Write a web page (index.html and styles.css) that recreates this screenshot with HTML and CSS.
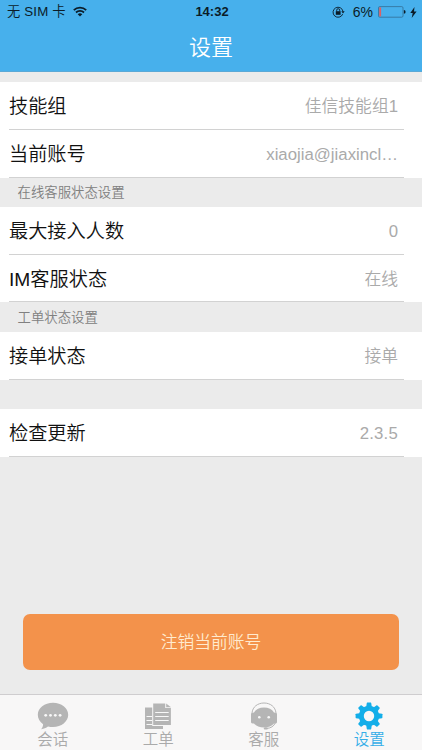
FILE: index.html
```html
<!DOCTYPE html>
<html lang="zh-CN">
<head>
<meta charset="utf-8">
<title>设置</title>
<link rel="stylesheet" href="styles.css">
</head>
<body>
<div class="app">
  <header class="header">
    <div class="status">
      <div class="status-left">
        <span>无 SIM 卡</span>
        <svg class="wifi" width="14" height="11" viewBox="0 0 14 11" fill="none" stroke="#0b1c28" stroke-width="1.8"><path d="M.8 4.1a9 9 0 0 1 12.4 0M3 6.5a5.8 5.8 0 0 1 8 0"/><path d="M4.7 8.2a3.4 3.4 0 0 1 4.6 0L7 10.5z" fill="#0b1c28" stroke="none"/></svg>
      </div>
      <span class="clock">14:32</span>
      <div class="status-right">
        <svg class="lock" width="13" height="12" viewBox="0 0 13 12" fill="none" stroke="#0b1c28"><path d="M10.7 8.1A5 5 0 1 1 11 5.5" stroke-width=".9"/><path d="M9.3 5.3h3.4L11 7.5z" fill="#0b1c28" stroke="none"/><path d="M4.7 5.4V4.2a1.5 1.5 0 0 1 3 0v1.2" stroke-width=".9"/><path d="M3.8 5.2h4.8v3.6H3.8z" fill="#0b1c28" stroke="none"/></svg>
        <span class="percent">6%</span>
        <svg class="battery" width="28" height="12" viewBox="0 0 28 12"><rect x=".5" y=".6" width="24.5" height="10.6" rx="1.3" fill="none" stroke="#326f96" stroke-width=".8"/><path d="M1.2 1.4h1.9v9H1.2z" fill="#dc6165"/><path d="M25.9 4.1q1.7 0 1.7 1.8t-1.7 1.8z" fill="#0b1c28"/></svg>
        <svg class="bolt" width="7" height="11" viewBox="0 0 7 11"><path d="M4.5 0 .3 5.9h2.4L1.7 11l4.9-6.6H4z" fill="#0b1c28"/></svg>
      </div>
    </div>
    <h1 class="title">设置</h1>
  </header>
  <main class="content">
    <section class="group">
      <div class="row"><span class="label">技能组</span><span class="value">佳信技能组1</span></div>
      <div class="row"><span class="label">当前账号</span><span class="value">xiaojia@jiaxincl…</span></div>
    </section>
    <h2 class="section-title">在线客服状态设置</h2>
    <section class="group">
      <div class="row"><span class="label">最大接入人数</span><span class="value">0</span></div>
      <div class="row row-short"><span class="label">IM客服状态</span><span class="value">在线</span></div>
    </section>
    <h2 class="section-title section-tall">工单状态设置</h2>
    <section class="group">
      <div class="row"><span class="label">接单状态</span><span class="value">接单</span></div>
    </section>
    <section class="group group-update">
      <div class="row"><span class="label">检查更新</span><span class="value version">2.3.5</span></div>
    </section>
    <button class="logout">注销当前账号</button>
  </main>
  <nav class="tabs">
    <a class="tab">
      <svg width="32" height="28" viewBox="0 0 32 28"><path d="M16 .7c8.4 0 15.200 5.300 15.200 12S24.400 25 16 25c-1.800 0-3.500-.2-5-.6-1.800 1.300-4.200 2.200-6.900 2.900 1.200-1.500 1.900-3.200 2-5.100C2.800 19.900.8 16.500.8 12.700.8 6 7.600.7 16 .7z" fill="#b5b5b5"/><g fill="#f8f8f8"><circle cx="8.700" cy="13.300" r="1.400"/><circle cx="13.500" cy="13.300" r="1.400"/><circle cx="18.300" cy="13.300" r="1.400"/><circle cx="23.100" cy="13.300" r="1.400"/></g></svg>
      <span>会话</span>
    </a>
    <a class="tab">
      <svg width="32" height="28" viewBox="0 0 32 28"><path d="M3 5.500h7.200V24H21v3H3z" fill="#b5b5b5"/><path d="M11.200 1.500h12V6h5.700v17H11.200z" fill="#b5b5b5"/><path d="M24.200 1.500 29 5.200h-4.800z" fill="#b5b5b5"/><path d="M13.200 10.500h13.500M13.200 14.500h13.500M13.200 18.500h13.500M4.500 14.500h5.700M4.500 18.500h5.700M4.500 22.500h5.700" stroke="#f8f8f8" stroke-width="1"/></svg>
      <span>工单</span>
    </a>
    <a class="tab">
      <svg width="32" height="28" viewBox="0 0 32 28"><path d="M4 11C4.600 4.900 9.600 1 16 1s11.400 3.900 12 10" fill="none" stroke="#b5b5b5" stroke-width="1"/><path d="M3 12q0-1.500 3-1.500C8 7.300 11.500 5.500 16 5.500s8 1.800 10 5q3 0 3 1.500v8q0 1.500-3 1.500-3.500 4-10 4t-10-4q-3 0-3-1.500z" fill="#b5b5b5"/><path d="M27.300 21c-1.500 3.200-4.300 5.200-9 5.500" fill="none" stroke="#b5b5b5" stroke-width="1"/><ellipse cx="17.800" cy="26.400" rx="2" ry="1.200" fill="#b5b5b5"/><circle cx="11.300" cy="15.300" r="1.300" fill="#f8f8f8"/><circle cx="20.700" cy="15.300" r="1.300" fill="#f8f8f8"/></svg>
      <span>客服</span>
    </a>
    <a class="tab active">
      <svg width="32" height="28" viewBox="0 0 32 28"><g fill="#13aee9"><path id="tooth" d="m13.800 1 .4-.4h3.600l.4.4.8 5h-6z"/><use href="#tooth" transform="rotate(45 16 14)"/><use href="#tooth" transform="rotate(90 16 14)"/><use href="#tooth" transform="rotate(135 16 14)"/><use href="#tooth" transform="rotate(180 16 14)"/><use href="#tooth" transform="rotate(225 16 14)"/><use href="#tooth" transform="rotate(270 16 14)"/><use href="#tooth" transform="rotate(315 16 14)"/></g><circle cx="16" cy="14" r="7.700" fill="none" stroke="#13aee9" stroke-width="5"/></svg>
      <span>设置</span>
    </a>
  </nav>
</div>
</body>
</html>
```
FILE: styles.css
```css
* { box-sizing: border-box; }
body {
  margin: 0;
  background: #ebebeb;
  font-family: "Liberation Sans", "Noto Sans CJK SC", sans-serif;
  font-weight: 350;
}
.app {
  width: 422px;
  height: 750px;
  display: flex;
  flex-direction: column;
  overflow: hidden;
}
.header {
  height: 72px;
  flex: none;
  background: #47b0ec;
  border-bottom: 1px solid #5ba9d6;
}
.status {
  height: 24px;
  display: grid;
  grid-template-columns: 1fr auto 1fr;
  align-items: center;
  padding: 0 5px 0 7px;
  color: #0b1c28;
  font-size: 13.300px;
  line-height: 24px;
}
.status-left, .status-right { display: flex; align-items: center; }
.status-left { letter-spacing: .15px; }
.wifi { margin: -2px 0 0 7px; }
.clock { font-weight: 700; font-size: 13px; }
.status-right { justify-content: flex-end; }
.lock { margin-top: -1px; }
.percent { margin: 0 5px 0 8px; font-size: 14px; }
.bolt { margin-left: 4px; }
.title {
  margin: 0;
  padding-top: 1px;
  color: #fff;
  font-size: 22px;
  line-height: 46px;
  font-weight: 350;
  text-align: center;
}
.content { flex: 1; padding-top: 10px; }
.group { background: #fff; }
.group-update { margin-top: 29px; }
.row {
  height: 48px;
  display: flex;
  justify-content: space-between;
  margin: 0 18px 0 9px;
  padding-right: 6px;
  border-bottom: 1px solid #d2d2d2;
  line-height: 49px;
}
.row-short { height: 47px; }
.label { color: #111; font-size: 19.200px; }
.value { color: #aaa; font-size: 16.800px; }
.version { letter-spacing: .2px; }
.section-title {
  height: 29px;
  margin: 0;
  padding-left: 17.500px;
  color: #808080;
  font-size: 13.400px;
  font-weight: 350;
  line-height: 29px;
}
.section-tall { height: 30px; line-height: 31px; }
.logout {
  display: block;
  width: 376px;
  height: 56px;
  margin: 157px auto 0 23px;
  padding: 0;
  border: 0;
  border-radius: 7px;
  background: #f3924b;
  color: #ffebcf;
  font: inherit;
  font-size: 16.800px;
  line-height: 58px;
}
.tabs {
  height: 56px;
  flex: none;
  display: grid;
  grid-template-columns: repeat(4, 1fr);
  border-top: 1px solid #cfcdcf;
  background: #f8f7f7;
}
.tab {
  display: flex;
  flex-direction: column;
  align-items: center;
  padding-top: 7px;
  color: #aaa;
  font-size: 15.500px;
  line-height: 20px;
}
.tab svg { flex: none; }
.active { color: #35aee8; }
```
